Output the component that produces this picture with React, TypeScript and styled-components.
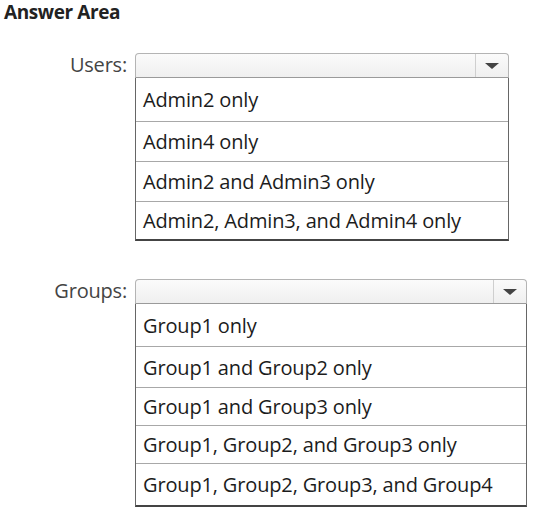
import React from "react";
import styled, { createGlobalStyle } from "styled-components";

const GlobalStyle = createGlobalStyle`
  body {
    margin: 0;
    background: #fff;
    font-family: "Open Sans", "Noto Sans", sans-serif;
  }
`;

const Page = styled.div`
  width: 535px;
  height: 511px;
  padding: 0 0 0 4px;
  box-sizing: border-box;
`;

const Title = styled.h1`
  margin: 0;
  font-size: 19px;
  font-weight: 700;
  color: #222;
  letter-spacing: -0.4px;
  line-height: 24px;
`;

const Field = styled.div<{ $top: number }>`
  display: grid;
  grid-template-columns: 123px auto;
  column-gap: 8px;
  align-items: start;
  margin-top: ${(p) => p.$top}px;
`;

const Label = styled.label`
  text-align: right;
  font-size: 20px;
  letter-spacing: -0.2px;
  color: #444;
  line-height: 24px;
`;

const Select = styled.div<{ $width: number }>`
  width: ${(p) => p.$width}px;
`;

const Header = styled.div`
  display: flex;
  height: 23px;
  border: 1px solid #b4b4b4;
  border-bottom-color: #9a9a9a;
  border-radius: 4px 4px 0 0;
  background: linear-gradient(#fbfbfb, #efefef);
`;

const HeaderValue = styled.div`
  flex: 1;
`;

const Arrow = styled.div`
  width: 32px;
  border-left: 1px solid #cfcfcf;
  display: flex;
  align-items: center;
  justify-content: center;

  &::after {
    content: "";
    border-left: 7px solid transparent;
    border-right: 7px solid transparent;
    border-top: 6px solid #444;
  }
`;

const Options = styled.ul`
  list-style: none;
  margin: 0;
  padding: 0;
  border: 1px solid #666;
  border-top: none;
  border-bottom: 2px solid #444;
`;

const Option = styled.li<{ $h: number }>`
  height: ${(p) => p.$h}px;
  display: flex;
  align-items: center;
  padding-left: 7px;
  font-size: 20px;
  letter-spacing: -0.15px;
  color: #1c1c1c;
  border-top: 1px solid #a8a8a8;
  &:first-child {
    border-top: none;
  }
`;

type Menu = {
  label: string;
  width: number;
  top: number;
  rows: [string, number][];
};

const menus: Menu[] = [
  {
    label: "Users:",
    width: 374,
    top: 29,
    rows: [
      ["Admin2 only", 43],
      ["Admin4 only", 39],
      ["Admin2 and Admin3 only", 39],
      ["Admin2, Admin3, and Admin4 only", 37],
    ],
  },
  {
    label: "Groups:",
    width: 392,
    top: 38,
    rows: [
      ["Group1 only", 42],
      ["Group1 and Group2 only", 40],
      ["Group1 and Group3 only", 37],
      ["Group1, Group2, and Group3 only", 37],
      ["Group1, Group2, Group3, and Group4", 41],
    ],
  },
];

export default function App() {
  return (
    <Page>
      <GlobalStyle />
      <Title>Answer Area</Title>
      {menus.map((m) => (
        <Field key={m.label} $top={m.top}>
          <Label>{m.label}</Label>
          <Select $width={m.width}>
            <Header>
              <HeaderValue />
              <Arrow />
            </Header>
            <Options>
              {m.rows.map(([text, h]) => (
                <Option key={text} $h={h}>
                  {text}
                </Option>
              ))}
            </Options>
          </Select>
        </Field>
      ))}
    </Page>
  );
}
